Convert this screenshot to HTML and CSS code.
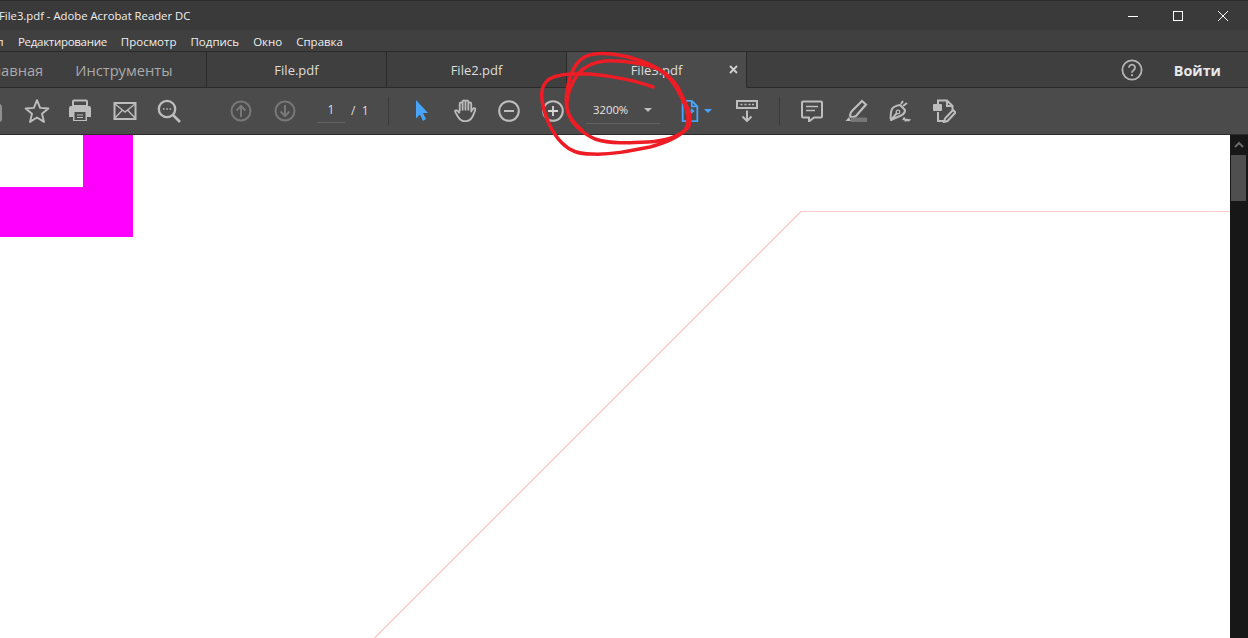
FILE: index.html
```html
<!DOCTYPE html>
<html lang="ru">
<head>
<meta charset="utf-8">
<title>File3.pdf - Adobe Acrobat Reader DC</title>
<link rel="stylesheet" href="styles.css">
</head>
<body>
<div class="app">
  <header class="titlebar">
    <span class="title">File3.pdf - Adobe Acrobat Reader DC</span>
    <div class="winctl">
      <span class="winbtn"><svg width="12" height="12" viewBox="0 0 12 12"><path d="M1 6.500h10" stroke="#fff" fill="none"/></svg></span>
      <span class="winbtn"><svg width="12" height="12" viewBox="0 0 12 12"><rect x="1.500" y="1.500" width="9" height="9" stroke="#fff" fill="none"/></svg></span>
      <span class="winbtn"><svg width="12" height="12" viewBox="0 0 12 12"><path d="M1 1l10 10M11 1L1 11" stroke="#fff" fill="none"/></svg></span>
    </div>
  </header>
  <nav class="menubar">
    <span class="menu-clip">л</span>
    <span class="menu-tight">Редактирование</span><span>Просмотр</span><span>Подпись</span><span>Окно</span><span>Справка</span>
  </nav>
  <div class="tabbar">
    <div class="hometabs"><span class="home">Главная</span><span>Инструменты</span></div>
    <div class="tab">File.pdf</div>
    <div class="tab">File2.pdf</div>
    <div class="tab active">File3.pdf<svg class="tabx" width="9" height="9" viewBox="0 0 9 9"><path d="M1 1l7 7M8 1L1 8" stroke="#d0d0d0" stroke-width="1.800" fill="none"/></svg></div>
    <div class="account">
      <svg class="help" width="22" height="22" viewBox="0 0 22 22"><circle cx="11" cy="11" r="9.600" fill="none" stroke="#b4b4b4" stroke-width="1.800"/><path d="M8 8.700a3 3 0 1 1 4.600 2.500c-1 .7-1.600 1.100-1.600 2.500" fill="none" stroke="#b4b4b4" stroke-width="1.800"/><circle cx="11" cy="16.200" r="1.100" fill="#b4b4b4"/></svg>
      <span class="login">Войти</span>
    </div>
  </div>
  <div class="toolbar">
    <span class="ico clipped"><svg width="24" height="24" viewBox="0 0 24 24"><rect x="4" y="6" width="16" height="16" rx="2" fill="none" stroke="#8f8f8f" stroke-width="2"/></svg></span>
    <span class="ico"><svg width="26" height="26" viewBox="0 0 26 26"><path d="M13 2.200l3.100 7.700 8.300.6-6.400 5.300 2 8.100-7-4.400-7 4.400 2-8.100-6.400-5.300 8.300-.6z" fill="none" stroke="#bdbdbd" stroke-width="1.900" stroke-linejoin="round"/></svg></span>
    <span class="ico"><svg width="24" height="24" viewBox="1 0 24 24"><path d="M5 7V2.500a1 1 0 0 1 1-1h12a1 1 0 0 1 1 1V7z" fill="none" stroke="#bdbdbd" stroke-width="2"/><path d="M3 7h18a2 2 0 0 1 2 2v9h-4v4H5v-4H1V9a2 2 0 0 1 2-2z" fill="#bdbdbd"/><rect x="6.500" y="13" width="11" height="8" fill="#4b4b4b"/><path d="M9 16h6M9 18.500h6" stroke="#bdbdbd" stroke-width="1.200"/></svg></span>
    <span class="ico"><svg width="24" height="20" viewBox="0 0 24 20"><rect x="1.500" y="2" width="21" height="16" fill="none" stroke="#bdbdbd" stroke-width="2"/><path d="M2 3l10 8 10-8M2 17l7.500-8M22 17l-7.500-8" fill="none" stroke="#bdbdbd" stroke-width="1.400"/></svg></span>
    <span class="ico"><svg width="24" height="24" viewBox="0 0 24 24"><circle cx="10" cy="10" r="8.200" fill="none" stroke="#bdbdbd" stroke-width="2.300"/><path d="M16 16l7 7" stroke="#bdbdbd" stroke-width="2.600"/><path d="M6 10h1.500M9.300 10h1.500M12.600 10h1.500" stroke="#bdbdbd" stroke-width="1.600"/></svg></span>
    <span class="gap-a"></span>
    <span class="ico"><svg width="22" height="22" viewBox="0 0 22 22"><circle cx="11" cy="11" r="9.500" fill="none" stroke="#787878" stroke-width="2"/><path d="M11 17V6M6.500 10.500L11 6l4.500 4.500" fill="none" stroke="#787878" stroke-width="2"/></svg></span>
    <span class="ico"><svg width="22" height="22" viewBox="0 0 22 22"><circle cx="11" cy="11" r="9.500" fill="none" stroke="#787878" stroke-width="2"/><path d="M11 5v11M6.500 11.500L11 16l4.500-4.500" fill="none" stroke="#787878" stroke-width="2"/></svg></span>
    <span class="pageinput">1</span>
    <span class="pagetotal">/&nbsp;&nbsp;1</span>
    <span class="sep sep-a"></span>
    <span class="ico"><svg width="16" height="22" viewBox="-1 0 16 22"><path d="M2 0l12 13H9l3 6-3 2-3-6.500-4 4z" fill="#48a4f8"/></svg></span>
    <span class="ico"><svg width="24" height="25" viewBox="0 0 24 26"><path d="M6.500 14V6a1.500 1.500 0 0 1 3 0V4a1.500 1.500 0 0 1 3 0v0a1.500 1.500 0 0 1 3 0V6a1.500 1.500 0 0 1 3 0v8c1-2 2-4 3.500-3.500s.5 2.500-.5 5c-1 3-3 8.500-8 8.500H11c-4 0-6-4-7.500-6.500S1 13.500 2 13s3 .5 4.500 3M9.500 6v7M12.500 4v9M15.500 5v8" fill="none" stroke="#bdbdbd" stroke-width="1.900" stroke-linejoin="round"/></svg></span>
    <span class="ico"><svg width="22" height="22" viewBox="0 0 22 22"><circle cx="11" cy="11" r="9.800" fill="none" stroke="#bdbdbd" stroke-width="2"/><path d="M6 11h10" stroke="#bdbdbd" stroke-width="2"/></svg></span>
    <span class="ico"><svg width="22" height="22" viewBox="0 0 22 22"><circle cx="11" cy="11" r="9.800" fill="none" stroke="#bdbdbd" stroke-width="2"/><path d="M6 11h10M11 6v10" stroke="#d8d8d8" stroke-width="1.800"/></svg></span>
    <span class="zoombox"><span>3200%</span><i class="caret"></i></span>
    <span class="fitpage">
      <svg width="18" height="22" viewBox="0 0 18 24"><path d="M1 1h10l6 6v16H1zM11 1v6h6" fill="none" stroke="#48a4f8" stroke-width="2"/><path d="M5 12h8M10 9.500l3 2.500-3 2.500M5 9.500v5" fill="none" stroke="#48a4f8" stroke-width="1.500"/></svg>
      <i class="caret blue"></i>
    </span>
    <span class="ico"><svg width="22" height="22" viewBox="0 0 22 22"><rect x="1" y="1" width="20" height="7" fill="none" stroke="#bdbdbd" stroke-width="2"/><path d="M4.500 4.500h2M8.500 4.500h2M12.500 4.500h2M16 4.500h2" stroke="#bdbdbd" stroke-width="1.500"/><path d="M11 10.500V21M6.500 16.500L11 21l4.500-4.500" fill="none" stroke="#bdbdbd" stroke-width="2"/></svg></span>
    <span class="sep sep-b"></span>
    <span class="ico"><svg width="22" height="22" viewBox="0 0 22 22"><path d="M2 1.500h18a1 1 0 0 1 1 1v14a1 1 0 0 1-1 1h-7l-5 4v-4H2a1 1 0 0 1-1-1v-14a1 1 0 0 1 1-1z" fill="none" stroke="#bdbdbd" stroke-width="2"/><path d="M5 6.500h12M5 10.500h9" stroke="#bdbdbd" stroke-width="1.300"/></svg></span>
    <span class="ico"><svg width="24" height="24" viewBox="0 0 24 24"><path d="M18 2l4 3.500-10 11.500c-1.500 1-3 1.500-5 1l-1-1.500c.3-2 .8-3.500 2-4.500z" fill="none" stroke="#bdbdbd" stroke-width="2.200"/><path d="M5 18l-3.500 4H7z" fill="#bdbdbd"/><rect x="7" y="18.500" width="16" height="4.500" fill="#777"/></svg></span>
    <span class="ico"><svg width="24" height="24" viewBox="0 0 24 24"><path d="M12 6l5 5c0 2-1 4-3 5l-11 5c-1-2 0-9 1-11 1.500-2.500 5-3.500 8-4zM3 21l6-7" fill="none" stroke="#bdbdbd" stroke-width="2" stroke-linejoin="round"/><circle cx="10" cy="13" r="1.800" fill="none" stroke="#bdbdbd" stroke-width="1.300"/><path d="M13 5l2-3M15 7l4-3" stroke="#bdbdbd" stroke-width="2"/><path d="M15 21c1-3 1.500-3 2 0s1-2 1.500 0 1-2 1.500 0 1-1 2.500 0" fill="none" stroke="#bdbdbd" stroke-width="1.500"/></svg></span>
    <span class="ico"><svg width="24" height="24" viewBox="0 0 24 24"><path d="M6 5V1.500h9L20.500 7v4M6 13v9h7" fill="none" stroke="#bdbdbd" stroke-width="2"/><path d="M15 1.500V7h5.500" fill="none" stroke="#bdbdbd" stroke-width="2"/><rect x="1" y="5" width="9" height="7" rx="1" fill="#bdbdbd"/><path d="M21 11l2.500 2.500-8 8.500-3.500 1 1-3.500z" fill="none" stroke="#bdbdbd" stroke-width="2"/></svg></span>
  </div>
  <main class="viewer">
    <div class="canvas">
      <svg class="drawing" width="1230" height="503" viewBox="0 135 1230 503">
        <path d="M83 135h50v102H0v-50h83z" fill="#ff00ff"/>
        <path class="hairline" d="M374.500 638L801 211.500h429" fill="none" stroke="#ffcccc"/>
      </svg>
    </div>
    <div class="scrollbar">
      <svg class="scrollup" width="10" height="7" viewBox="0 0 10 7"><path d="M1 6l4-4 4 4" fill="none" stroke="#6a6a6a" stroke-width="2"/></svg>
      <div class="thumb"></div>
    </div>
  </main>
  <svg class="scribble" width="1248" height="638" viewBox="0 0 1248 638">
    <path d="M653 87C640 82 615 76 590 74C572 73 556 74 548 80C542 85 541 92 542 100C544 115 551 132 562 143C570 151 578 154 592 154C610 155 630 151 650 147C665 143 682 136 689 126C692 118 689 110 685 102C680 92 678 84 666 74C652 63 630 56 612 54C600 53 590 53 583 58C575 63 571 72 568 85C566 95 565 105 568 113C572 124 582 133 595 139C610 144 630 143 648 142C662 141 677 138 685 130C690 122 688 112 684 103C678 90 672 78 660 70C648 64 622 60 605 61C594 62 584 67 578 74C572 82 568 92 567 102C566 112 572 122 582 130" fill="none" stroke="#ee1c25" stroke-width="3.500" stroke-linecap="round" stroke-linejoin="round"/>
  </svg>
</div>
</body>
</html>
```
FILE: styles.css
```css
* { box-sizing: border-box; }
html, body { margin: 0; height: 100%; overflow: hidden; }
body { font-family: "Open Sans", "Noto Sans", sans-serif; background: #3c3c3c; color: #e6e6e6; }
.app { position: relative; width: 1248px; height: 638px; display: flex; flex-direction: column; overflow: hidden; }
.titlebar { height: 30px; flex: none; display: flex; align-items: center; justify-content: space-between; background: #3a3a3a; border-top: 1px solid #2b2b2b; }
.title { font-size: 11.300px; margin-left: -1px; color: #eee; white-space: nowrap; }
.winctl { display: flex; margin-right: 3px; }
.winbtn { width: 45px; height: 30px; display: flex; align-items: center; justify-content: center; }
.menubar { height: 21px; flex: none; display: flex; align-items: center; gap: 14px; padding-top: 1px; background: #404040; font-size: 11.500px; color: #eee; white-space: nowrap; }
.menu-clip { margin-left: -3px; width: 7px; overflow: hidden; }
.menu-tight { letter-spacing: -.3px; }
.tabbar { height: 37px; flex: none; display: flex; align-items: stretch; background: #3f3f3f; border-top: 1px solid #2a2a2a; border-bottom: 1px solid #2a2a2a; font-size: 13px; padding-top: 1px; }
.hometabs { width: 207px; flex: none; display: flex; align-items: center; gap: 32px; border-right: 1px solid #2a2a2a; margin-top: -1px; padding-top: 1px; font-size: 14.700px; color: #aaa; white-space: nowrap; overflow: hidden; }
.home { margin-left: -15px; }
.tab { width: 180px; flex: none; display: flex; align-items: center; justify-content: center; position: relative; border-right: 1px solid #2a2a2a; color: #ddd; margin-top: -1px; padding-top: 1px; }
.tab.active { background: #4b4b4b; border-bottom: 1px solid #4b4b4b; margin-bottom: -1px; }
.tabx { position: absolute; right: 8px; top: 13px; }
.account { margin-left: auto; display: flex; align-items: center; padding-right: 27px; gap: 31px; }
.help { display: block; }
.login { font-weight: 700; font-size: 14.400px; color: #e8e8e8; }
.toolbar { height: 47px; flex: none; display: flex; align-items: center; background: #4b4b4b; border-bottom: 1px solid #2c2c2c; padding-bottom: 1px; }
.ico { width: 44px; flex: none; display: flex; align-items: center; justify-content: center; }
.ico svg { display: block; }
.clipped { margin-left: -29px; }
.gap-a { width: 28px; flex: none; }
.pageinput { width: 28px; margin-left: 10px; flex: none; text-align: center; font-size: 12px; color: #ddd; border-bottom: 1px solid #626262; padding-bottom: 4px; margin-top: 2px; }
.pagetotal { margin-left: 6px; width: 17px; flex: none; font-size: 12px; color: #ddd; white-space: nowrap; }
.sep { width: 1px; height: 28px; background: #3a3a3a; flex: none; }
.sep-a { margin-left: 20px; margin-right: 10px; }
.zoombox { width: 74px; margin-left: 11px; flex: none; display: flex; align-items: center; justify-content: space-between; padding: 0 8px 6px 7px; font-size: 11.300px; color: #e4e4e4; border-bottom: 1px solid #626262; margin-top: 5px; }
.caret { display: block; width: 0; height: 0; border-left: 4px solid transparent; border-right: 4px solid transparent; border-top: 4px solid #bdbdbd; }
.caret.blue { border-top-color: #48a4f8; }
.fitpage { flex: none; display: flex; align-items: center; gap: 5px; margin-left: 21px; width: 44px; }
.sep-b { margin-left: 10px; margin-right: 10px; }
.viewer { flex: 1; display: flex; min-height: 0; background: #fff; }
.canvas { flex: 1; position: relative; background: #fff; overflow: hidden; }
.drawing { position: absolute; left: 0; top: 0; }
.hairline { shape-rendering: crispEdges; }
.scrollbar { width: 18px; flex: none; background: #171717; display: flex; flex-direction: column; align-items: center; padding: 6px 2px 0 1px; }
.scrollup { display: block; margin-bottom: 7px; }
.thumb { width: 15px; height: 46px; background: #4f4f4f; }
.scribble { position: absolute; left: 0; top: 0; pointer-events: none; }
```
